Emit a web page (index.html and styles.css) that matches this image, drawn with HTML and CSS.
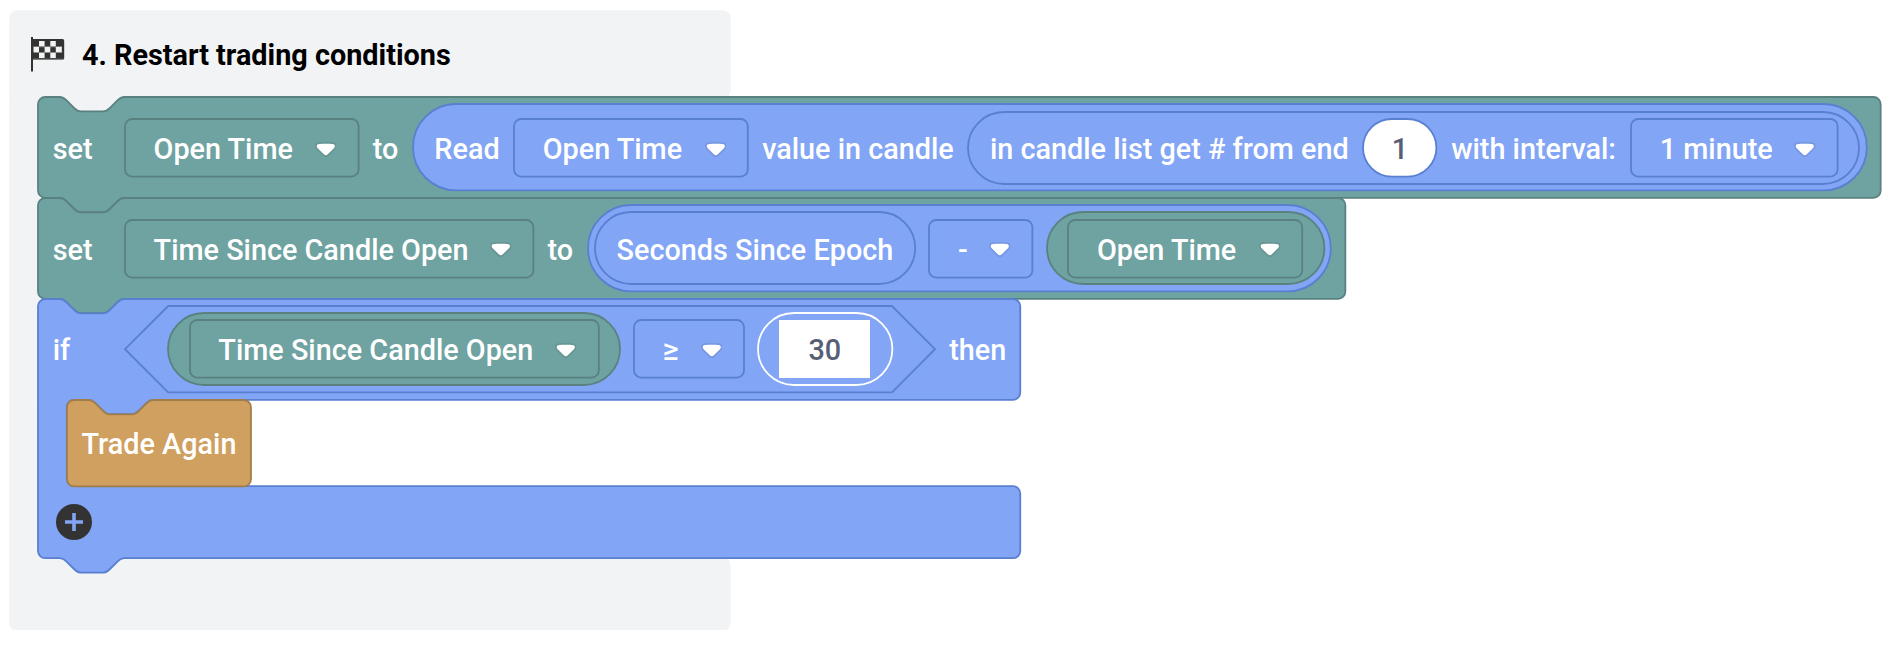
FILE: index.html
```html
<!DOCTYPE html>
<html lang="en">
<head>
<meta charset="utf-8">
<title>Restart trading conditions</title>
<link rel="stylesheet" href="styles.css">
</head>
<body>
<svg class="defs" aria-hidden="true">
  <symbol id="arrow" viewBox="0 0 12.71 8.79">
    <path fill="#231f20" opacity=".1" d="M12.71,2.44A2.41,2.41,0,0,1,12,4.16L8.08,8.08a2.45,2.45,0,0,1-3.45,0L0.72,4.16A2.42,2.42,0,0,1,0,2.44,2.48,2.48,0,0,1,.71.71C1,0.47,1.43,0,6.36,0S11.75,0.46,12,.71A2.44,2.44,0,0,1,12.71,2.44Z"/>
    <path fill="#fff" d="M6.36,7.79a1.43,1.43,0,0,1-1-.42L1.42,3.45a1.44,1.44,0,0,1,0-2c0.56-.56,9.31-0.56,9.87,0a1.44,1.44,0,0,1,0,2L7.37,7.37A1.43,1.43,0,0,1,6.36,7.79Z"/>
  </symbol>
</svg>
<main class="root">
  <svg class="shape base"><path transform="scale(1.8)" d="M0 4a4 4 0 0 1 4-4H396a4 4 0 0 1 4 4V44a4 4 0 0 1-4 4H64c-2 0-3 1-4 2l-4 4c-1 1-2 2-4 2H40c-2 0-3-1-4-2l-4-4c-1-1-2-2-4-2H20a4 4 0 0 0-4 4V300a4 4 0 0 0 4 4H396a4 4 0 0 1 4 4V340a4 4 0 0 1-4 4H4a4 4 0 0 1-4-4Z"/></svg>
  <header class="head">
    <svg class="flag" viewBox="0 0 34 35">
      <path fill="#333" d="M0 0h2v34.500H0zM2 2H31.500q1.700 0 1.700 1.700V21q0 1.700-1.700 1.700H2z"/>
      <path fill="#8a8b8c" d="M2.500 9.200h28.700v1H2.500zM2.500 15h28.700v1H2.500zM2 21.700h30.500v1H2z"/>
      <path fill="#f2f3f5" d="M8 4h5.600v5.200H8zM19.300 4h5.500v5.200h-5.500zM2.500 10.100H8v5H2.500zM13.600 10.100h5.700v5h-5.700zM24.800 10.100h6v5h-6zM8 16h5.600v5H8zM19.300 16h5.500v5h-5.500z"/>
    </svg>
    <h1 class="title">4. Restart trading conditions</h1>
  </header>
  <section class="stack">
    <div class="block row-read">
      <svg class="shape green"><path transform="scale(1.8)" d="M0 4a4 4 0 0 1 4-4H12c2 0 3 1 4 2l4 4c1 1 2 2 4 2H36c2 0 3-1 4-2l4-4c1-1 2-2 4-2H1019.700a4 4 0 0 1 4 4V52a4 4 0 0 1-4 4H48c-2 0-3 1-4 2l-4 4c-1 1-2 2-4 2H24c-2 0-3-1-4-2l-4-4c-1-1-2-2-4-2H4a4 4 0 0 1-4-4Z"/></svg>
      <span class="label">set</span>
      <span class="field green"><svg class="shape"><rect width="100%" height="100%" rx="7.2"/></svg>Open Time<svg class="arrow"><use href="#arrow"/></svg></span>
      <span class="label">to</span>
      <div class="pill tall blue read">
        <svg class="shape"><rect width="100%" height="100%" rx="43.2"/></svg>
        <span class="label first">Read</span>
        <span class="field blue"><svg class="shape"><rect width="100%" height="100%" rx="7.2"/></svg>Open Time<svg class="arrow"><use href="#arrow"/></svg></span>
        <span class="label">value in candle</span>
        <div class="pill blue candle">
          <svg class="shape"><rect width="100%" height="100%" rx="36"/></svg>
          <span class="label first">in candle list get # from end</span>
          <span class="number"><svg class="shape white"><rect width="100%" height="100%" rx="28.8"/></svg>1</span>
          <span class="label">with interval:</span>
          <span class="field blue"><svg class="shape"><rect width="100%" height="100%" rx="7.2"/></svg>1 minute<svg class="arrow"><use href="#arrow"/></svg></span>
        </div>
      </div>
    </div>
    <div class="block row-since">
      <svg class="shape green"><path transform="scale(1.8)" d="M0 4a4 4 0 0 1 4-4H12c2 0 3 1 4 2l4 4c1 1 2 2 4 2H36c2 0 3-1 4-2l4-4c1-1 2-2 4-2H722.300a4 4 0 0 1 4 4V52a4 4 0 0 1-4 4H48c-2 0-3 1-4 2l-4 4c-1 1-2 2-4 2H24c-2 0-3-1-4-2l-4-4c-1-1-2-2-4-2H4a4 4 0 0 1-4-4Z"/></svg>
      <span class="label">set</span>
      <span class="field green"><svg class="shape"><rect width="100%" height="100%" rx="7.2"/></svg>Time Since Candle Open<svg class="arrow"><use href="#arrow"/></svg></span>
      <span class="label">to</span>
      <div class="pill tall blue minus">
        <svg class="shape"><rect width="100%" height="100%" rx="43.2"/></svg>
        <div class="pill blue"><svg class="shape"><rect width="100%" height="100%" rx="36"/></svg><span class="label first">Seconds Since Epoch</span></div>
        <span class="field blue"><svg class="shape"><rect width="100%" height="100%" rx="7.2"/></svg>-<svg class="arrow"><use href="#arrow"/></svg></span>
        <div class="pill green variable"><svg class="shape"><rect width="100%" height="100%" rx="36"/></svg><span class="field green"><svg class="shape"><rect width="100%" height="100%" rx="7.2"/></svg>Open Time<svg class="arrow"><use href="#arrow"/></svg></span></div>
      </div>
    </div>
    <div class="block row-if">
      <svg class="shape blue"><path transform="scale(1.8)" d="M0 4a4 4 0 0 1 4-4H12c2 0 3 1 4 2l4 4c1 1 2 2 4 2H36c2 0 3-1 4-2l4-4c1-1 2-2 4-2H541.700a4 4 0 0 1 4 4V52a4 4 0 0 1-4 4H64c-2 0-3 1-4 2l-4 4c-1 1-2 2-4 2H40c-2 0-3-1-4-2l-4-4c-1-1-2-2-4-2H20a4 4 0 0 0-4 4V100a4 4 0 0 0 4 4H541.700a4 4 0 0 1 4 4V140a4 4 0 0 1-4 4H48c-2 0-3 1-4 2l-4 4c-1 1-2 2-4 2H24c-2 0-3-1-4-2l-4-4c-1-1-2-2-4-2H4a4 4 0 0 1-4-4Z"/></svg>
      <span class="label">if</span>
      <div class="condition">
        <svg class="shape blue"><path d="M43.200 0H767L810 43.200L767 86.400H43.200L0 43.200Z"/></svg>
        <div class="pill green variable"><svg class="shape"><rect width="100%" height="100%" rx="36"/></svg><span class="field green"><svg class="shape"><rect width="100%" height="100%" rx="7.2"/></svg>Time Since Candle Open<svg class="arrow"><use href="#arrow"/></svg></span></div>
        <span class="field blue"><svg class="shape"><rect width="100%" height="100%" rx="7.2"/></svg><span class="operator">≥</span><svg class="arrow"><use href="#arrow"/></svg></span>
        <div class="pill editing"><svg class="shape ring"><rect width="100%" height="100%" rx="36"/></svg><span class="value">30</span></div>
      </div>
      <span class="label">then</span>
    </div>
    <div class="trade">
      <svg class="shape brown"><path transform="scale(1.8)" d="M0 4a4 4 0 0 1 4-4H12c2 0 3 1 4 2l4 4c1 1 2 2 4 2H36c2 0 3-1 4-2l4-4c1-1 2-2 4-2H98.200a4 4 0 0 1 4 4V44a4 4 0 0 1-4 4H4a4 4 0 0 1-4-4Z"/></svg>
      <span class="label">Trade Again</span>
    </div>
    <div class="foot">
      <svg class="plus" viewBox="0 0 36 36"><circle cx="18" cy="18" r="18" fill="#333"/><path d="M18 9v18M9 18h18" stroke="#82a5f6" stroke-width="3.600"/></svg>
    </div>
  </section>
</main>
</body>
</html>
```
FILE: styles.css
```css
body {
  margin: 0;
  background: #fff;
  color: #fff;
  font: 500 28.8px/36px Roboto, sans-serif;
  overflow: hidden;
}
.defs {
  position: absolute;
  width: 0;
  height: 0;
}
.root {
  position: relative;
  margin: 10.8px 0 0 9.6px;
  width: 1872px;
  height: 619.2px;
}
/* Outline drawn behind the content of its box */
.shape {
  position: absolute;
  inset: 0;
  z-index: -1;
  width: 100%;
  height: 100%;
  overflow: visible;
  stroke-width: 1.8px;
}
.shape path { vector-effect: non-scaling-stroke; }
.base { fill: #f2f3f5; stroke: #f2f3f5; stroke-width: 1.4px; }
.green { fill: #6fa3a1; stroke: #5a8180; }
.blue { fill: #82a5f6; stroke: #597fd1; }
.brown { fill: #cfa060; stroke: #a07d4a; }
.white { fill: #fff; stroke: #597fd1; }
.ring { fill: none; stroke: #fff; }

.head {
  display: flex;
  align-items: flex-start;
  height: 86.4px;
  padding-left: 21.4px;
}
.flag {
  width: 34px;
  height: 35px;
  margin-top: 26.4px;
}
.title {
  margin: 26.6px 0 0 17px;
  color: #000;
  font-size: 28.8px;
  font-weight: 700;
  line-height: 36px;
  white-space: nowrap;
}
.stack {
  display: flex;
  flex-direction: column;
  margin-left: 28.8px;
}
.root, .block, .pill, .field, .number, .condition, .trade {
  position: relative;
  z-index: 0;
}
.block {
  display: grid;
  align-items: center;
  height: 100.8px;
}
.label {
  padding: 3px 0 0 14.4px;
  white-space: nowrap;
}
.label.first { padding-left: 21.6px; }
.field {
  display: flex;
  align-items: center;
  box-sizing: border-box;
  height: 57.6px;
  padding: 3px 21.6px 0 28.8px;
  justify-content: space-between;
  white-space: nowrap;
}
.operator {
  font-size: 31px;
}
.arrow {
  flex: none;
  width: 21.6px;
  height: 15px;
  stroke: none;
}
.pill {
  display: grid;
  align-items: center;
  height: 72px;
}
.pill.tall { height: 86.4px; }

.row-read {
  width: 1842.6px;
  grid-template-columns: 86.4px 233.6px 54.4px 1453.8px;
}
.read { grid-template-columns: 101.2px 233.8px 220.6px 891px; }
.candle { grid-template-columns: 395px 73.4px 194.2px 206.6px; }
.number {
  height: 57.6px;
  line-height: 61px;
  text-align: center;
  color: #575e75;
}
.row-since {
  width: 1306.8px;
  grid-template-columns: 86.4px 408.4px 54.6px 742.8px;
}
.minus {
  grid-template-columns: 320.2px 103.4px 277.4px;
  column-gap: 14px;
  padding-left: 7.2px;
}
.variable { padding: 0 21.6px; }
.row-if {
  width: 982.2px;
  grid-template-columns: 86.4px 810px 1fr;
}
.row-if > .shape { height: 259.2px; }
.row-if .label, .row-if .field { padding-top: 2px; }
.condition {
  display: grid;
  align-items: center;
  height: 86.4px;
  grid-template-columns: 452px 110px 134.4px;
  column-gap: 13.8px;
  padding-left: 43.2px;
  box-sizing: border-box;
}
.editing { justify-content: center; }
.value {
  width: 91px;
  height: 57.6px;
  line-height: 60px;
  background: #fff;
  color: #575e75;
  text-align: center;
}
.trade {
  display: flex;
  align-items: center;
  width: 184px;
  height: 86.4px;
  margin-left: 28.8px;
}
.foot {
  display: flex;
  align-items: center;
  height: 72px;
  padding-left: 18px;
  position: relative;
}
.plus {
  width: 36px;
  height: 36px;
}
```
